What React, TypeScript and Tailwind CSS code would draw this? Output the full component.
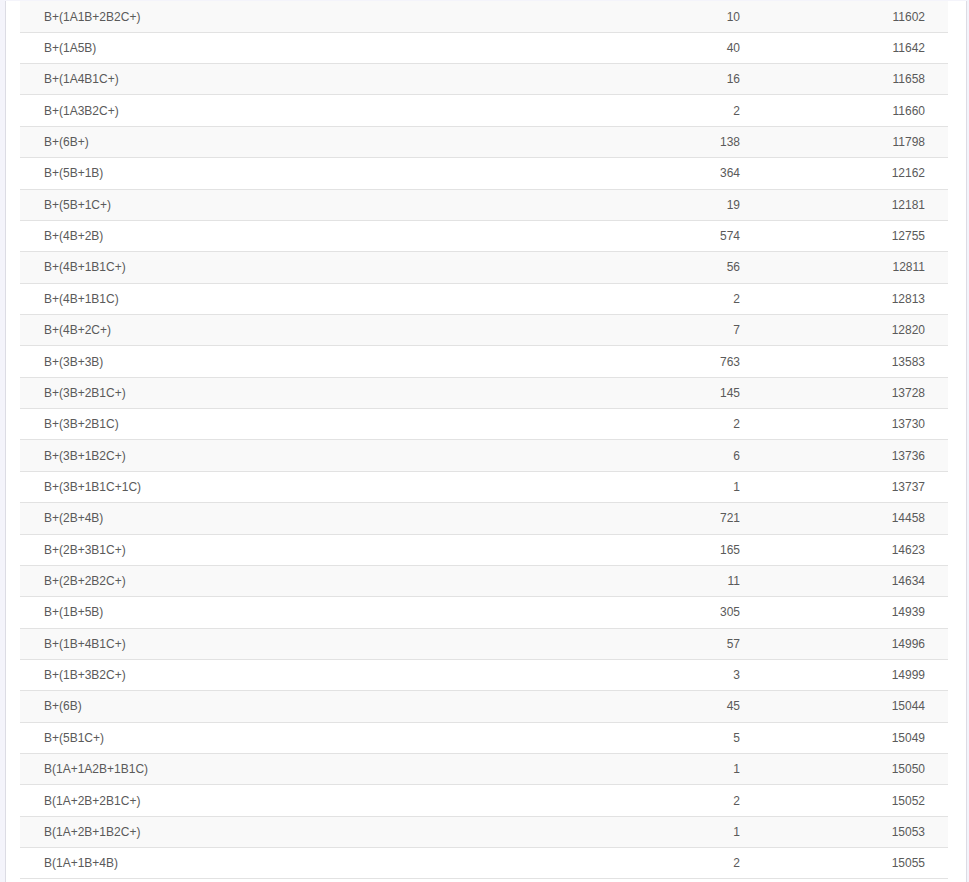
const rows: [string, number, number][] = [
  ['B+(1A1B+2B2C+)', 10, 11602],
  ['B+(1A5B)', 40, 11642],
  ['B+(1A4B1C+)', 16, 11658],
  ['B+(1A3B2C+)', 2, 11660],
  ['B+(6B+)', 138, 11798],
  ['B+(5B+1B)', 364, 12162],
  ['B+(5B+1C+)', 19, 12181],
  ['B+(4B+2B)', 574, 12755],
  ['B+(4B+1B1C+)', 56, 12811],
  ['B+(4B+1B1C)', 2, 12813],
  ['B+(4B+2C+)', 7, 12820],
  ['B+(3B+3B)', 763, 13583],
  ['B+(3B+2B1C+)', 145, 13728],
  ['B+(3B+2B1C)', 2, 13730],
  ['B+(3B+1B2C+)', 6, 13736],
  ['B+(3B+1B1C+1C)', 1, 13737],
  ['B+(2B+4B)', 721, 14458],
  ['B+(2B+3B1C+)', 165, 14623],
  ['B+(2B+2B2C+)', 11, 14634],
  ['B+(1B+5B)', 305, 14939],
  ['B+(1B+4B1C+)', 57, 14996],
  ['B+(1B+3B2C+)', 3, 14999],
  ['B+(6B)', 45, 15044],
  ['B+(5B1C+)', 5, 15049],
  ['B(1A+1A2B+1B1C)', 1, 15050],
  ['B(1A+2B+2B1C+)', 2, 15052],
  ['B(1A+2B+1B2C+)', 1, 15053],
  ['B(1A+1B+4B)', 2, 15055],
];

export default function App() {
  return (
    <div className="h-[882px] overflow-hidden bg-[#f4f4fb] px-[5px] pr-[2px] font-['Liberation_Sans',Arial,sans-serif] text-[12px] text-[#5a5a5a]">
      <div className="h-full border-x border-[#dcdce4] bg-white pl-[14px] pr-[17px]">
        <div className="mt-[1.4px] w-[928px]">
          {rows.map(([name, count, total], i) => (
            <div
              key={name}
              className={`flex h-[31.37px] items-center border-b border-[#e2e2e2] pl-[24px] pr-[23px] ${
                i % 2 === 0 ? 'bg-[#f9f9f9]' : 'bg-white'
              }`}
            >
              <span className="flex-1">{name}</span>
              <span className="w-[100px] text-right">{count}</span>
              <span className="w-[185px] text-right">{total}</span>
            </div>
          ))}
        </div>
      </div>
    </div>
  );
}
